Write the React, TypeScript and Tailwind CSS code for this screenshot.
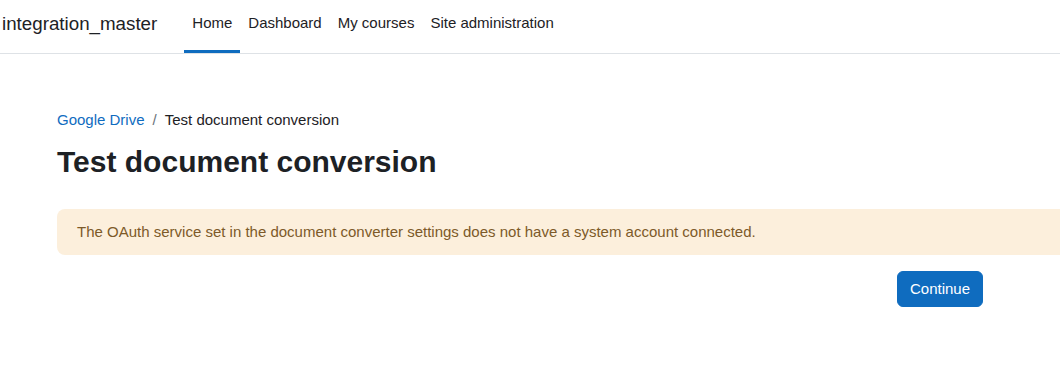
export default function App() {
  const links = ['Home', 'Dashboard', 'My courses', 'Site administration'];

  return (
    <div className="w-[1060px] h-[376px] overflow-hidden bg-white text-[#1d2125] font-['Liberation_Sans',Arial,sans-serif]">
      {/* top navbar */}
      <nav className="h-[54px] flex items-stretch border-b border-[#dee2e6] pl-[2px]">
        <div className="flex items-center text-[18.75px] pb-[5px] mr-[27px]">integration_master</div>
        <div className="flex items-stretch">
          {links.map((l, i) => (
            <a
              key={l}
              className={
                'flex items-center px-2 pb-[3px] text-[15px] border-b-[3px] ' +
                (i === 0 ? 'border-[#0f6cbf]' : 'border-transparent')
              }
            >
              {l}
            </a>
          ))}
        </div>
      </nav>

      <main className="w-[926px] ml-[57px] pt-[55px]">
        <div className="flex items-center gap-2 text-[15px] leading-[22px]">
          <a className="text-[#0f6cbf]">Google Drive</a>
          <span className="text-[#6a737b]">/</span>
          <span>Test document conversion</span>
        </div>
        <h2 className="mt-[13px] text-[30px] font-bold leading-[36px]">Test document conversion</h2>

        <div className="mt-[29px] w-[1100px] rounded-lg bg-[#fcefdc] text-[#7d5a29] text-[15px] leading-[22.5px] px-5 py-[11.5px]">
          The OAuth service set in the document converter settings does not have a system account connected.
        </div>

        <div className="flex justify-end mt-4">
          <button className="bg-[#0f6cbf] text-white text-[15px] leading-[22.5px] px-3 py-[6px] border border-[#0f6cbf] rounded-md">
            Continue
          </button>
        </div>
      </main>
    </div>
  );
}
